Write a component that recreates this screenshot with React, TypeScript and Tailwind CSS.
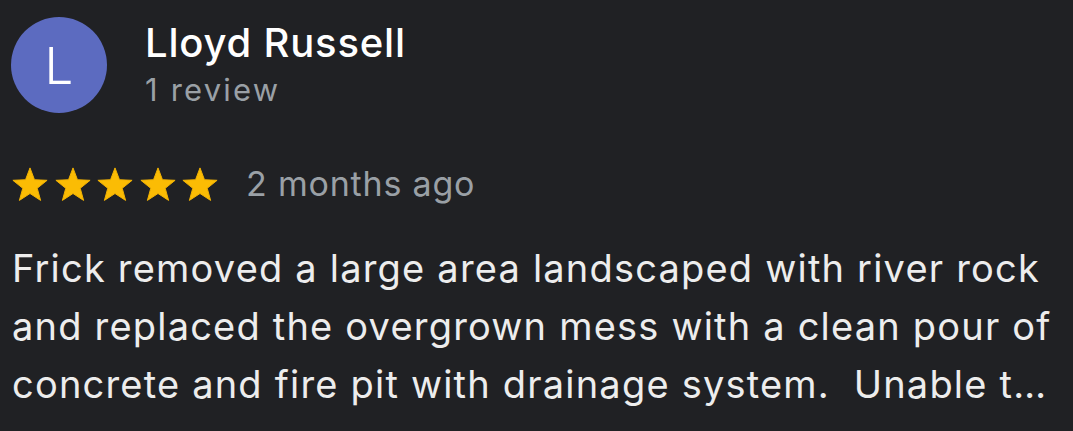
import React from 'react'

function Star() {
  return (
    <svg viewBox="0 0 36 34" className="w-[36px] h-[34px]">
      <path
        d="M18 0.9L22.47 12.75L35.1 13.3L25.23 21.25L28.6 33.4L18 26.5L7.4 33.4L10.77 21.25L0.9 13.3L13.53 12.75Z"
        fill="#fbbc04"
        stroke="#f2b203"
        strokeWidth="1"
        strokeLinejoin="round"
      />
    </svg>
  )
}

export default function App() {
  return (
    <div className="w-[1073px] h-[431px] bg-[#202124] overflow-hidden font-['Inter','Liberation_Sans',sans-serif]">
      <div className="flex items-start pt-[17px] pl-[11px]">
        <div className="w-[96px] h-[96px] rounded-full bg-[#5c6bc0] flex items-center justify-center text-white text-[51px] leading-none font-light">
          L
        </div>
        <div className="ml-[38px] mt-[4px] flex flex-col">
          <div className="text-white text-[40px] leading-[44px] font-medium tracking-[0.8px]">Lloyd Russell</div>
          <div className="mt-[3px] text-[#9aa0a6] text-[31px] leading-[44px] tracking-[2.2px]">1 review</div>
        </div>
      </div>
      <div className="flex items-start mt-[54px] pl-[12px]">
        <div className="flex gap-[6.5px]">
          <Star />
          <Star />
          <Star />
          <Star />
          <Star />
        </div>
        <span className="ml-[28px] text-[#9aa0a6] text-[34px] leading-[34px] tracking-[0.8px]">2 months ago</span>
      </div>
      <div className="mt-[38px] pl-[12px] text-[#ededed] text-[38px] leading-[58px] tracking-[1.2px]">
        <div className="whitespace-nowrap">Frick removed a large area landscaped with river rock</div>
        <div className="whitespace-nowrap">and replaced the overgrown mess with a clean pour of</div>
        <div className="whitespace-pre">concrete and fire pit with drainage system.  Unable t…</div>
      </div>
    </div>
  )
}
